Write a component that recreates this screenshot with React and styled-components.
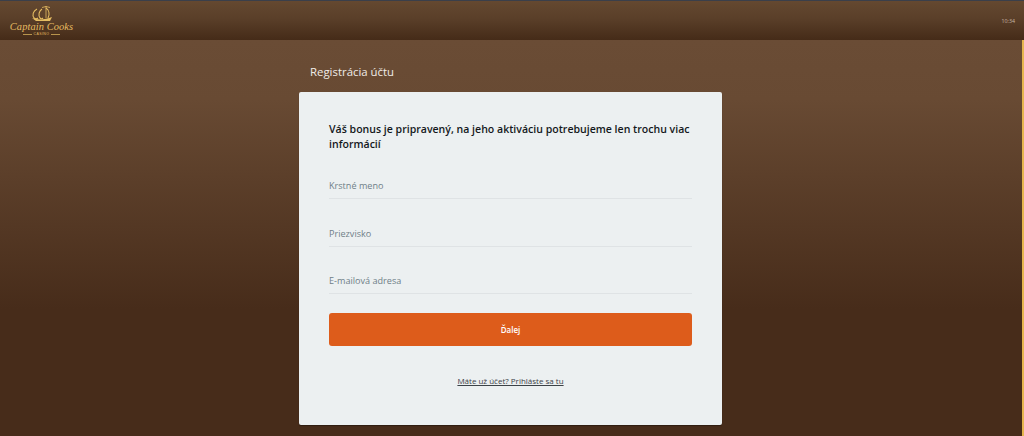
import React from 'react';
import styled, { createGlobalStyle } from 'styled-components';

const GlobalStyle = createGlobalStyle`
  html, body {
    margin: 0;
    padding: 0;
    height: 100%;
    overflow: hidden;
  }
  body {
    font-family: "Open Sans", "Noto Sans", "Liberation Sans", sans-serif;
  }
  * {
    box-sizing: border-box;
  }
`;

const Page = styled.div`
  display: flex;
  flex-direction: column;
  height: 436px;
  background: #472c1a;
`;

const Header = styled.header`
  display: flex;
  align-items: flex-start;
  justify-content: space-between;
  flex: none;
  height: 40px;
  padding: 0 9px 0 10px;
  border-top: 1px solid #3a3f4a;
  background: linear-gradient(to bottom, #644830 0%, #5a3f29 45%, #452b18 100%);
`;

const Logo = styled.div`
  display: flex;
  flex-direction: column;
  align-items: center;
  width: 63px;
  padding-top: 5px;
  color: #e6bd62;
`;

const LogoName = styled.span`
  margin-top: 1px;
  font-family: "Liberation Serif", serif;
  font-style: italic;
  font-size: 10.4px;
  line-height: 9px;
  letter-spacing: 0.1px;
  white-space: nowrap;
`;

const LogoSub = styled.span`
  display: flex;
  align-items: center;
  gap: 2px;
  margin-top: 1px;
  font-family: "Liberation Sans", sans-serif;
  font-size: 3.5px;
  line-height: 4px;
  letter-spacing: 0.4px;

  &::before,
  &::after {
    content: "";
    width: 9px;
    height: 1px;
    background: #b8944c;
  }
`;

const Clock = styled.span`
  margin-top: 16px;
  font-size: 5.3px;
  line-height: 8px;
  color: #c7b6a6;
`;

const Main = styled.main`
  flex: 1;
  position: relative;
  display: flex;
  flex-direction: column;
  align-items: center;
  padding-right: 3px;
  background: linear-gradient(to bottom, #6a4c35 0%, #684a33 15%, #472c1a 68%, #472c1a 100%);
`;

const ScrollMark = styled.div`
  position: absolute;
  top: 0;
  right: 0;
  bottom: 0;
  width: 2.5px;
  background: #e5b64f;
`;

const Column = styled.div`
  display: flex;
  flex-direction: column;
  width: 423px;
  padding-top: 23px;
`;

const PageTitle = styled.h1`
  margin: 0 0 11px 11px;
  font-size: 11.4px;
  line-height: 18px;
  font-weight: 400;
  color: #f0ece8;
`;

const Card = styled.section`
  display: flex;
  flex-direction: column;
  height: 333px;
  padding: 30px 30px 0;
  background: #ecf0f1;
  border-radius: 2px;
  box-shadow: 0 1px 1px rgba(0, 0, 0, 0.35);
`;

const Lead = styled.p`
  margin: 0;
  font-size: 10.55px;
  line-height: 15px;
  font-weight: 600;
  color: #14181c;
`;

const Field = styled.label`
  display: flex;
  align-items: flex-end;
  height: 47.4px;
  padding-bottom: 6px;
  border-bottom: 1px solid #dfe3e5;
  font-size: 9.1px;
  line-height: 13px;
  color: #6f7f88;
`;

const NextButton = styled.button`
  flex: none;
  height: 33px;
  margin-top: 18.6px;
  border: 0;
  border-radius: 3px;
  background: #dd5c1b;
  color: #fff;
  font-family: inherit;
  font-size: 8px;
  font-weight: 600;
`;

const LoginLink = styled.a`
  align-self: center;
  margin-top: 29px;
  font-size: 8px;
  line-height: 12px;
  color: #3c4247;
  text-decoration: underline;
`;

const Ship = () => (
  <svg width="22" height="15" viewBox="0 0 22 15" fill="none" stroke="#e6bd62" strokeWidth="1.1">
    <path d="M6 3C2 5 1 9 3 12c1 1 3 1 4 0" />
    <path d="M11 3C8 5 7 9 9 12c1 1 2 1 3 0" />
    <path d="M15 2c3 2 4 6 2 10" />
    <path d="M11 1.5l4-1 4 1M15 0v12" strokeWidth="0.8" />
    <path d="M1 12c5 2 13 2 20-1l-2 4H5z" fill="#e6bd62" stroke="none" />
  </svg>
);

export default function App() {
  return (
    <Page>
      <GlobalStyle />
      <Header>
        <Logo>
          <Ship />
          <LogoName>Captain Cooks</LogoName>
          <LogoSub>CASINO</LogoSub>
        </Logo>
        <Clock>10:34</Clock>
      </Header>
      <Main>
        <Column>
          <PageTitle>Registrácia účtu</PageTitle>
          <Card>
            <Lead>Váš bonus je pripravený, na jeho aktiváciu potrebujeme len trochu viac informácií</Lead>
            <Field>Krstné meno</Field>
            <Field>Priezvisko</Field>
            <Field>E-mailová adresa</Field>
            <NextButton type="button">Ďalej</NextButton>
            <LoginLink href="#">Máte už účet? Prihláste sa tu</LoginLink>
          </Card>
        </Column>
        <ScrollMark />
      </Main>
    </Page>
  );
}
